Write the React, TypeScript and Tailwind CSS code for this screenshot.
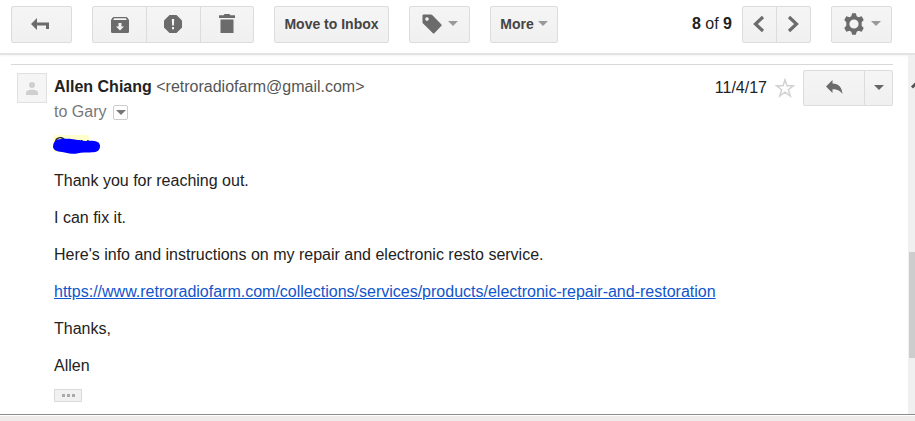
import React from "react";
import clsx from "clsx";

type ToolButtonProps = {
  label: string;
  className?: string;
  children: React.ReactNode;
};

const ToolButton = ({ label, className, children }: ToolButtonProps) => (
  <button
    type="button"
    aria-label={label}
    className={clsx(
      "flex items-center justify-center border border-[#dcdcdc] bg-linear-to-b from-[#f5f5f5] to-[#f0f0f0] text-sm font-bold text-[#444]",
      className
    )}
  >
    {children}
  </button>
);

const Caret = ({ className }: { className?: string }) => (
  <svg viewBox="0 0 10 5" className={clsx("h-[5px] w-[10px]", className)} fill="currentColor">
    <path d="M0 0h10L5 5z" />
  </svg>
);

const BackIcon = () => (
  <svg viewBox="0 0 18 12" className="h-3 w-[18px]" fill="#6b6b6b">
    <path d="M0 6 6 0v4.500h12V11h-3V7.500H6V12z" />
  </svg>
);

const ArchiveIcon = () => (
  <svg viewBox="0 0 18 16" className="h-4 w-[18px]">
    <path
      fillRule="evenodd"
      fill="#6b6b6b"
      d="M3 0h12q1 0 1.500.8L18 3v11.500q0 1.500-1.500 1.500h-15Q0 16 0 14.500V3L1.500.8Q2 0 3 0zM3 1.300 2.300 3h13.400L15 1.300zM7.500 6v3.500H5l4 4 4-4h-2.500V6z"
    />
  </svg>
);

const SpamIcon = () => (
  <svg viewBox="0 0 18 18" className="size-[18px]">
    <path fill="#6b6b6b" d="M5.500 0h7L18 5.500v7L12.500 18h-7L0 12.500v-7z" />
    <path fill="#f5f5f5" d="M7.800 4h2.400l-.3 6.500H8.100zM8 12h2v2.200H8z" />
  </svg>
);

const TrashIcon = () => (
  <svg viewBox="0 0 16 19" className="h-[19px] w-4" fill="#6b6b6b">
    <path d="M5.500 0h5l1 1.200H16V4H0V1.200h4.500zM1.500 5.500h13V19h-13z" />
  </svg>
);

const TagIcon = () => (
  <svg viewBox="0 0 20 20" className="size-5">
    <path
      fillRule="evenodd"
      fill="#6b6b6b"
      d="M1.500.5h7.300q.8 0 1.400.6l9 9.100q.9 1 0 1.900l-6.600 6.800q-.9 1-1.900 0L1.100 9.600Q.5 9 .5 8.200V1.500q0-1 1-1zM5 3.300a1.800 1.800 0 1 0 0 3.600 1.800 1.800 0 0 0 0-3.600z"
    />
  </svg>
);

const ChevronIcon = ({ flip = false }: { flip?: boolean }) => (
  <svg viewBox="0 0 12 18" className="h-[18px] w-3" fill="none" stroke="#6b6b6b" strokeWidth="3.200">
    <path d={flip ? "M2 2l7.500 7L2 16" : "M10 2 2.500 9l7.500 7"} />
  </svg>
);

const GearIcon = () => (
  <svg viewBox="0 0 22 22" className="size-[22px]">
    <path
      fillRule="evenodd"
      fill="#6b6b6b"
      d="M9.200.3h3.600l.9 2.900 1.800 1 3.200-.9 2 3.600-2 2.400v3.400l2 2.400-2 3.600-3.200-.9-1.800 1-.9 2.900H9.200l-.9-2.900-1.800-1-3.200.9-2-3.600 2-2.400V9.300l-2-2.400 2-3.600 3.200.9 1.800-1zM11 6.400a4.600 4.600 0 1 0 0 9.200 4.600 4.600 0 0 0 0-9.200z"
    />
  </svg>
);

const StarIcon = () => (
  <svg viewBox="0 0 20 20" className="size-5" fill="#fff" stroke="#d2d2d2" strokeWidth="1.500">
    <path d="M10 1.800 12 7.700h6.500l-5.200 4 2 6.300-5.300-3.800L4.700 18l2-6.300-5.200-4H8z" />
  </svg>
);

const ReplyIcon = () => (
  <svg viewBox="0 0 17 14" className="h-[14px] w-[17px]" fill="#6b6b6b">
    <path d="M0 6.500 6.500 0v3.500C12.500 3.500 16 7.500 16.500 14 14 10.500 11 9.300 6.500 9.300V13z" />
  </svg>
);

const Toolbar = () => (
  <header className="flex h-[55px] items-start border-b-2 border-[#e3e3e3] pt-[6px] pr-[23px] pl-[11px] shadow-xs">
    <div className="flex h-[37px] gap-5">
      <ToolButton label="Back" className="w-[61px] rounded-xs pr-1 pb-[2px]">
        <BackIcon />
      </ToolButton>
      <div className="flex">
        <ToolButton label="Archive" className="w-[55px] rounded-l-xs">
          <ArchiveIcon />
        </ToolButton>
        <ToolButton label="Report spam" className="-ml-px w-[55px] pr-[2px] pb-[2px]">
          <SpamIcon />
        </ToolButton>
        <ToolButton label="Delete" className="-ml-px w-[54px] rounded-r-xs pb-[2px]">
          <TrashIcon />
        </ToolButton>
      </div>
      <ToolButton label="Move to Inbox" className="w-[115px] rounded-xs pb-[2px]">
        Move to Inbox
      </ToolButton>
      <ToolButton label="Labels" className="w-[61px] gap-[6px] rounded-xs pb-[2px]">
        <TagIcon />
        <Caret className="text-[#999]" />
      </ToolButton>
      <ToolButton label="More" className="w-[68px] gap-1 rounded-xs pb-[2px]">
        More
        <Caret className="text-[#999]" />
      </ToolButton>
    </div>
    <div className="ml-auto flex h-[37px] items-stretch">
      <p className="mr-[10px] self-center pb-[2px] text-base leading-5 text-[#222]">
        <b>8</b> of <b>9</b>
      </p>
      <ToolButton label="Newer" className="w-[35px] rounded-l-xs pr-[2px] pb-[2px]">
        <ChevronIcon />
      </ToolButton>
      <ToolButton label="Older" className="-ml-px w-[35px] rounded-r-xs pr-[2px] pb-[2px]">
        <ChevronIcon flip />
      </ToolButton>
      <ToolButton label="Settings" className="ml-5 w-[61px] gap-[6px] rounded-xs pb-[2px]">
        <GearIcon />
        <Caret className="text-[#999]" />
      </ToolButton>
    </div>
  </header>
);

const Avatar = () => (
  <div className="flex size-[30px] shrink-0 items-center justify-center border border-[#e0e0e0] bg-[#f5f5f5]">
    <svg viewBox="0 0 12 13" className="h-[13px] w-3" fill="#cfcfcf">
      <circle cx="6" cy="3" r="3" />
      <path d="M0 13v-2.200C0 8.500 3 7.700 6 7.700s6 .8 6 3.100V13z" />
    </svg>
  </div>
);

// Recipient name, highlighted and scribbled over
const RedactedName = () => (
  <p className="relative">
    <span className="bg-[#ffffcc]">Gary</span>
    <svg viewBox="0 0 48 16" className="absolute top-1 -left-px h-4 w-12" fill="#0000ff">
      <path d="M5 1.500C9 .5 15 .6 20 1.200c5 .5 9 2 14 1.700 4-.3 8-.3 11 1.300 3 2 2.500 6.500 0 8.500-3 2.200-9 1.400-14 1.800-5 .3-8 1.500-12 1.300-4-.2-6-1.500-10-1.800C4 13.800 0 12 0 8.500 0 5 2 2.500 5 1.500z" />
    </svg>
  </p>
);

const Message = () => (
  <article className="mt-[9px] mr-[15px] ml-[11px] flex-1 border-t border-[#d8d8d8] pt-[5px] pl-[6px]">
    <div className="flex items-start">
      <div className="flex min-w-0 flex-1 gap-[7px] pt-[3px]">
        <Avatar />
        <div className="pt-1 leading-5">
          <p className="text-[#555]">
            <b className="text-[#222]">Allen Chiang</b> &lt;retroradiofarm@gmail.com&gt;
          </p>
          <div className="mt-[5px] flex items-center gap-[7px] text-[#777]">
            to Gary
            <button
              type="button"
              aria-label="Show details"
              className="flex size-[15px] items-center justify-center rounded-xs border border-[#ccc]"
            >
              <Caret className="h-1 w-2 text-[#777]" />
            </button>
          </div>
        </div>
      </div>
      <div className="flex items-center">
        <time>11/4/17</time>
        <button type="button" aria-label="Star" className="mx-2">
          <StarIcon />
        </button>
        <div className="flex h-9">
          <ToolButton label="Reply" className="w-[62px] rounded-l-xs pb-[2px]">
            <ReplyIcon />
          </ToolButton>
          <ToolButton label="More actions" className="-ml-px w-[29px] rounded-r-xs pb-[2px]">
            <Caret className="w-2 text-[#666]" />
          </ToolButton>
        </div>
      </div>
    </div>
    <div className="mt-3 flex flex-col items-start gap-[17px] pl-[37px] leading-5">
      <RedactedName />
      <p>Thank you for reaching out.</p>
      <p>I can fix it.</p>
      <p>Here's info and instructions on my repair and electronic resto service.</p>
      <a
        href="https://www.retroradiofarm.com/collections/services/products/electronic-repair-and-restoration"
        className="text-[#1155cc] underline"
      >
        https://www.retroradiofarm.com/collections/services/products/electronic-repair-and-restoration
      </a>
      <p>Thanks,</p>
      <p>Allen</p>
    </div>
    <button
      type="button"
      aria-label="Show trimmed content"
      className="mt-[13px] ml-[37px] flex h-[13px] w-7 items-center justify-center gap-[2px] border border-[#dadada] bg-[#f1f1f1]"
    >
      <span className="size-[3px] bg-[#aaa]" />
      <span className="size-[3px] bg-[#aaa]" />
      <span className="size-[3px] bg-[#aaa]" />
    </button>
  </article>
);

// Only the left edge of the scrollbar is inside the frame
const Scrollbar = () => (
  <div className="flex w-[7px] flex-col overflow-hidden bg-[#f0f0f0] pl-px">
    <svg viewBox="0 0 6 10" className="mt-6 h-[10px] w-[6px] shrink-0" fill="none" stroke="#555" strokeWidth="3">
      <path d="M3 8.500 8 3.500" />
    </svg>
    <div className="grow-[163]" />
    <div className="grow-[106] bg-[#cdcdcd]" />
    <div className="grow-[56]" />
  </div>
);

const App = () => {
  return (
    <div className="flex min-h-screen flex-col bg-white font-['Liberation_Sans',Arial,sans-serif] text-base text-[#222]">
      <Toolbar />
      <main className="flex flex-1">
        <Message />
        <Scrollbar />
      </main>
      <footer className="border-t border-[#8c8c8c] pt-px">
        <div className="h-[5px] bg-[#f0ebeb]" />
      </footer>
    </div>
  );
};

export default App;
